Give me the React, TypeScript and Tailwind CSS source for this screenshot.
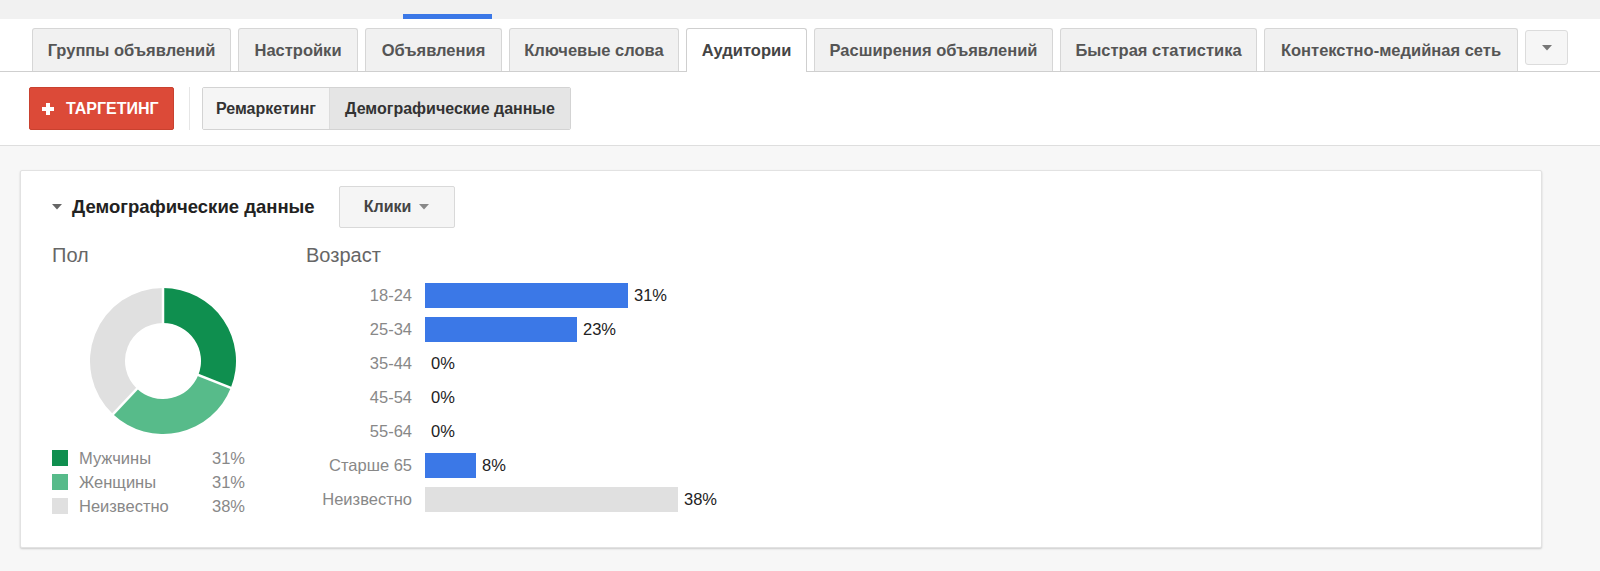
import React from 'react';

const tabs = [
  { label: 'Группы объявлений', cls: 'w-[199px]' },
  { label: 'Настройки', cls: 'w-[120px]' },
  { label: 'Объявления', cls: 'w-[137px]' },
  { label: 'Ключевые слова', cls: 'w-[170px]' },
  { label: 'Аудитории', cls: 'w-[121px]', active: true },
  { label: 'Расширения объявлений', cls: 'w-[239px]' },
  { label: 'Быстрая статистика', cls: 'w-[197px]' },
  { label: 'Контекстно-медийная сеть', cls: 'w-[254px]' },
];

const ages = [
  { label: '18-24', width: 203, value: '31%', color: 'bg-[#3b78e7]' },
  { label: '25-34', width: 152, value: '23%', color: 'bg-[#3b78e7]' },
  { label: '35-44', width: 0, value: '0%', color: 'bg-[#3b78e7]' },
  { label: '45-54', width: 0, value: '0%', color: 'bg-[#3b78e7]' },
  { label: '55-64', width: 0, value: '0%', color: 'bg-[#3b78e7]' },
  { label: 'Старше 65', width: 51, value: '8%', color: 'bg-[#3b78e7]' },
  { label: 'Неизвестно', width: 253, value: '38%', color: 'bg-[#e0e0e0]' },
];

const gender = [
  { label: 'Мужчины', value: '31%', color: 'bg-[#0f8f4f]' },
  { label: 'Женщины', value: '31%', color: 'bg-[#57bb8a]' },
  { label: 'Неизвестно', value: '38%', color: 'bg-[#e0e0e0]' },
];

const Caret = ({ fill = '#777' }: { fill?: string }) => (
  <svg width="10" height="6" viewBox="0 0 10 6">
    <path d="M0 0 L10 0 L5 5.5 Z" fill={fill} />
  </svg>
);

// point on circle, 0deg = 12 o'clock, clockwise
const pt = (r: number, deg: number) => {
  const a = ((deg - 90) * Math.PI) / 180;
  return [73 + r * Math.cos(a), 73 + r * Math.sin(a)];
};

const arc = (from: number, to: number, ro = 73, ri = 38) => {
  const large = to - from > 180 ? 1 : 0;
  const [x1, y1] = pt(ro, from);
  const [x2, y2] = pt(ro, to);
  const [x3, y3] = pt(ri, to);
  const [x4, y4] = pt(ri, from);
  return `M${x1} ${y1} A${ro} ${ro} 0 ${large} 1 ${x2} ${y2} L${x3} ${y3} A${ri} ${ri} 0 ${large} 0 ${x4} ${y4} Z`;
};

const Donut = () => {
  const cuts = [0, 111.6, 223.2];
  return (
    <svg width="146" height="146" viewBox="0 0 146 146">
      <path d={arc(0, 111.6)} fill="#0f8f4f" />
      <path d={arc(111.6, 223.2)} fill="#57bb8a" />
      <path d={arc(223.2, 360)} fill="#e0e0e0" />
      {cuts.map((c) => {
        const [x, y] = pt(75, c);
        return <line key={c} x1="73" y1="73" x2={x} y2={y} stroke="#fff" strokeWidth="2.5" />;
      })}
    </svg>
  );
};

export default function App() {
  return (
    <div className="w-[1600px] h-[571px] overflow-hidden bg-[#f7f7f7] font-['Liberation_Sans',Arial,sans-serif]">
      {/* top strip */}
      <div className="h-[19px] bg-[#f1f1f1] pt-[14px] pl-[403px]">
        <div className="w-[89px] h-[5px] bg-[#3b78e7]" />
      </div>

      <div className="bg-white">
        {/* tabs */}
        <div className="flex items-end gap-[7px] pl-[32px] h-[53px] border-b border-[#cfcfcf]">
          {tabs.map((t) =>
            t.active ? (
              <div
                key={t.label}
                className={`${t.cls} h-[44px] -mb-px flex items-center justify-center bg-white border border-b-0 border-[#cfcfcf] rounded-t-[3px] text-[16.5px] font-bold text-[#444]`}
              >
                {t.label}
              </div>
            ) : (
              <div
                key={t.label}
                className={`${t.cls} h-[43px] flex items-center justify-center bg-[#f1f1f1] border border-b-0 border-[#d6d6d6] rounded-t-[3px] text-[16.5px] font-bold text-[#555]`}
              >
                {t.label}
              </div>
            )
          )}
          <div className="w-[43px] h-[35px] mb-[6px] flex items-center justify-center bg-[#f6f6f6] border border-[#dcdcdc] rounded-[3px]">
            <Caret fill="#777" />
          </div>
        </div>

        {/* toolbar */}
        <div className="h-[74px] flex items-center pl-[29px] border-b border-[#dedede]">
          <button className="w-[145px] h-[43px] flex items-center pl-[12px] gap-[12px] bg-[#dc4a38] border border-[#c9412f] rounded-[2px] text-white text-[16px] font-bold">
            <svg width="12" height="12" viewBox="0 0 12 12">
              <rect x="4" y="0" width="4" height="12" fill="#fff" />
              <rect x="0" y="4" width="12" height="4" fill="#fff" />
            </svg>
            <span>ТАРГЕТИНГ</span>
          </button>
          <div className="ml-[15px] w-px h-[43px] bg-[#e6e6e6]" />
          <div className="ml-[12px] flex h-[43px] border border-[#d3d3d3] rounded-[2px] overflow-hidden text-[16px] font-bold text-[#333]">
            <div className="w-[126px] flex items-center justify-center bg-[#f5f5f5]">Ремаркетинг</div>
            <div className="w-[241px] flex items-center justify-center bg-[#e5e5e5] border-l border-[#dcdcdc]">
              Демографические данные
            </div>
          </div>
        </div>
      </div>

      {/* body */}
      <div className="pt-[24px] pl-[20px]">
        <div className="w-[1522px] h-[378px] bg-white border border-[#e2e2e2] rounded-[2px] shadow-[0_1px_2px_rgba(0,0,0,0.18)] pl-[31px] pt-[15px]">
          <div className="flex items-center h-[42px]">
            <Caret fill="#666" />
            <span className="ml-[10px] text-[18.5px] font-bold text-[#222]">Демографические данные</span>
            <button className="ml-[24px] w-[116px] h-[42px] flex items-center justify-center gap-[8px] bg-[#f5f5f5] border border-[#d9d9d9] rounded-[2px] text-[16px] font-bold text-[#444]">
              <span>Клики</span>
              <Caret fill="#888" />
            </button>
          </div>

          <div className="flex mt-[15px]">
            {/* gender */}
            <div className="w-[254px]">
              <div className="text-[20px] leading-[24px] text-[#666]">Пол</div>
              <div className="mt-[21px] ml-[38px]">
                <Donut />
              </div>
              <div className="mt-[12px] w-[193px]">
                {gender.map((g) => (
                  <div key={g.label} className="h-[24px] flex items-center text-[16.5px] text-[#888]">
                    <div className={`w-[16px] h-[16px] ${g.color}`} />
                    <span className="ml-[11px]">{g.label}</span>
                    <span className="ml-auto">{g.value}</span>
                  </div>
                ))}
              </div>
            </div>

            {/* age */}
            <div>
              <div className="text-[20px] leading-[24px] text-[#666]">Возраст</div>
              <div className="mt-[11px]">
                {ages.map((a) => (
                  <div key={a.label} className="h-[34px] flex items-center">
                    <div className="w-[106px] text-right text-[16.5px] text-[#888]">{a.label}</div>
                    <div className="ml-[13px] flex items-center gap-[6px]">
                      <div className={`h-[25px] ${a.color}`} style={{ width: a.width }} />
                      <span className="text-[16.5px] text-[#222]">{a.value}</span>
                    </div>
                  </div>
                ))}
              </div>
            </div>
          </div>
        </div>
      </div>
    </div>
  );
}
